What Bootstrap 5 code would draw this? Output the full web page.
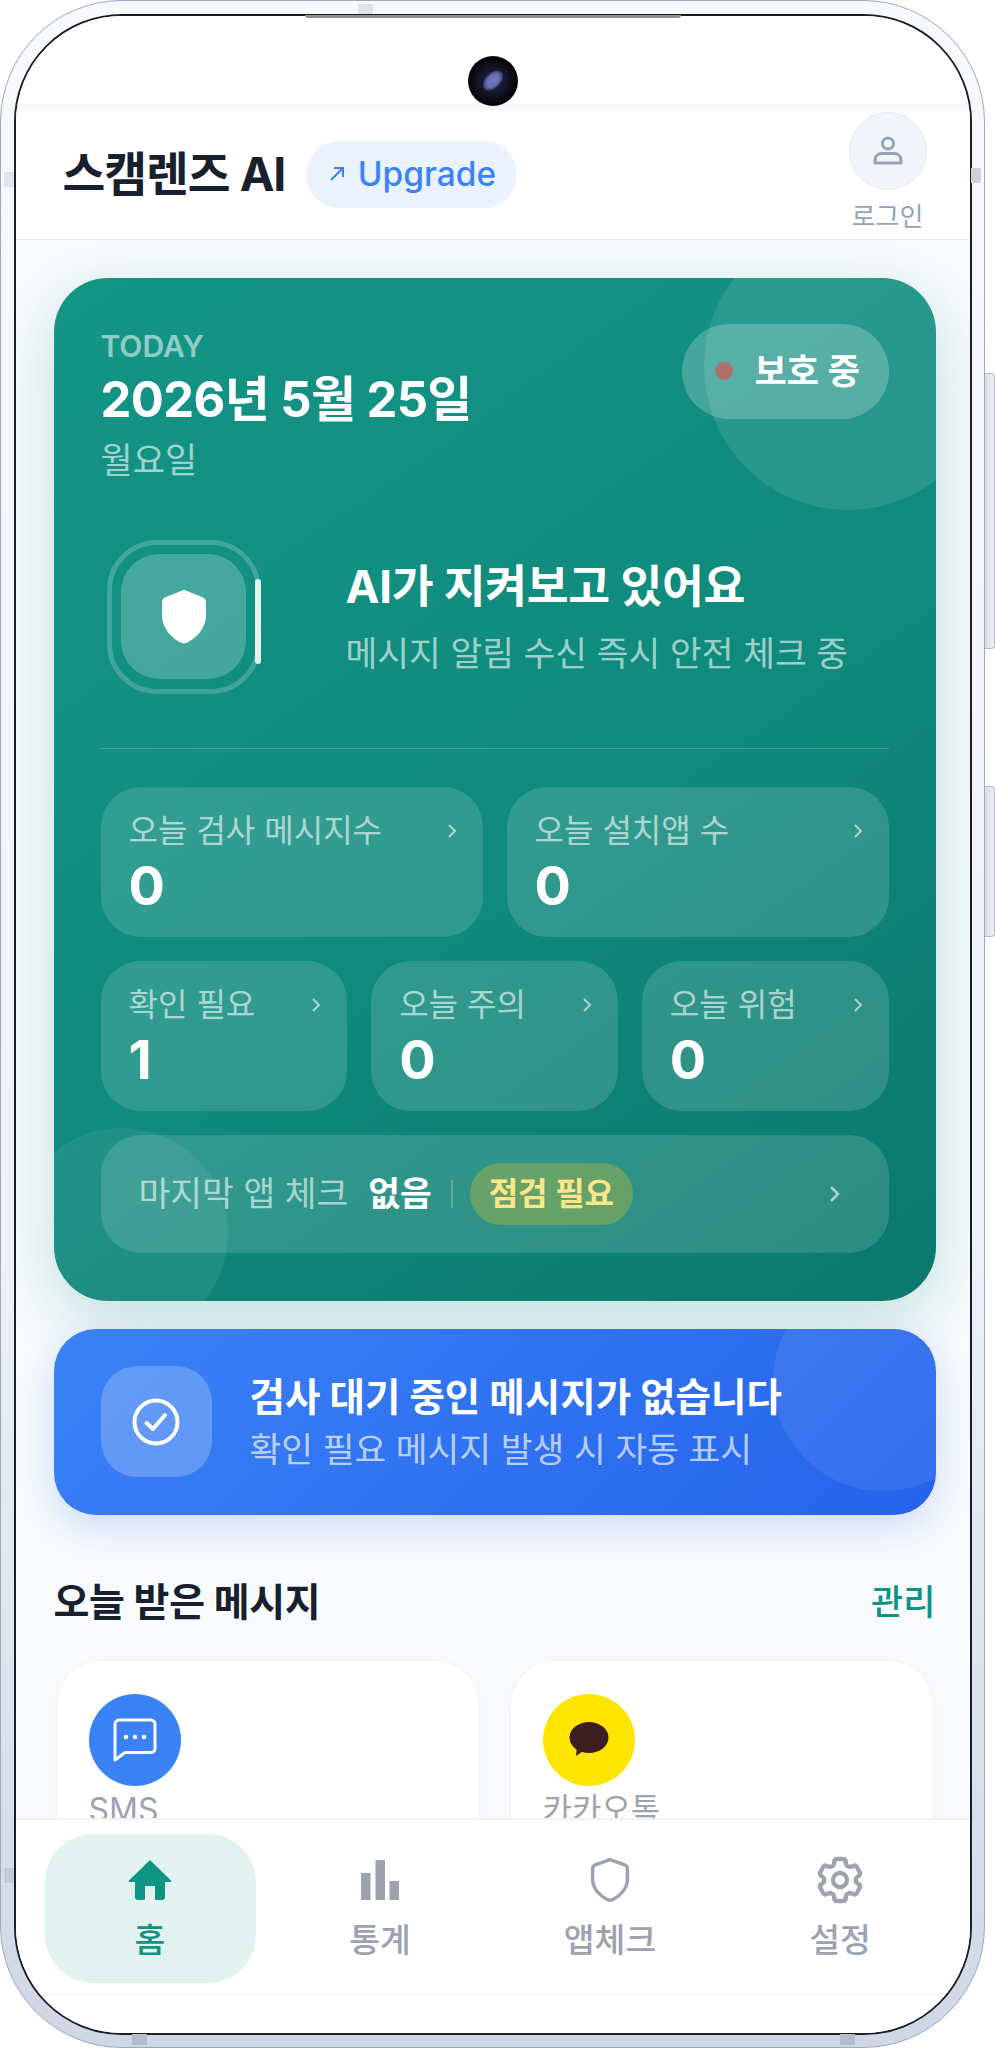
<!DOCTYPE html>
<html lang="ko">
<head>
    <meta charset="UTF-8">
    <meta name="viewport" content="width=device-width, initial-scale=1.0">
    <title>스캠렌즈 AI</title>
    <link href="https://cdn.jsdelivr.net/npm/bootstrap@5.3.0/dist/css/bootstrap.min.css" rel="stylesheet">
    <style>
        html, body { margin: 0; background: #fff; }
        body { font-family: Inter, "Noto Sans CJK KR", sans-serif; width: 995px; height: 2048px; overflow: hidden; color: #111827; }

        /* phone frame */
        .phone { position: relative; width: 985px; height: 2048px; border: 1.5px solid #9ea7bd; border-radius: 122px; padding: 12.5px; background: linear-gradient(180deg, #f8f9fd 0%, #eef1f8 60%, #cfd7e6 100%); }
        .screen { height: 100%; border: 2px solid #1b1e26; border-radius: 108px; overflow: hidden; background: #f8fafc; }
        .side-key { position: absolute; left: 984px; width: 10px; border: 1.5px solid #b4b9c5; border-left: 0; border-radius: 0 4px 4px 0; background: linear-gradient(90deg, #d9dce4, #eef0f4); }
        .key-a { top: 372px; height: 276px; }
        .key-b { top: 785px; height: 151px; }
        .band { position: absolute; background: #dfe3ec; }
        .band-top { left: 357px; top: 3px; width: 15px; height: 10px; }
        .band-l1 { left: 3px; top: 171px; width: 10px; height: 15px; }
        .band-l2 { left: 3px; top: 1867px; width: 10px; height: 15px; background: #c3cbdb; }
        .band-r { left: 970px; top: 167px; width: 10px; height: 15px; background: #ccd1de; }
        .band-b1 { left: 131px; top: 2033px; width: 15px; height: 11px; background: #b3bbcd; }
        .band-b2 { left: 839px; top: 2033px; width: 15px; height: 11px; background: #b3bbcd; }
        .speaker { position: absolute; left: 304px; top: 14px; width: 376px; height: 3px; border-radius: 0 0 8px 8px; background: #8b8e96; }
        .cam { position: absolute; left: 467px; top: 55px; width: 50px; height: 50px; border-radius: 50%; background: radial-gradient(circle at 50% 50%, #262a44 0, #14162a 38%, #08080c 62%, #000 100%); }
        .cam::after { content: ""; position: absolute; left: 13px; top: 17px; width: 24px; height: 15px; border-radius: 50%; transform: rotate(-45deg); background: radial-gradient(ellipse, #7478d8 0, #6670b0 45%, rgba(60,70,120,.5) 75%, transparent 100%); }

        /* top bars */
        .status-gap { height: 88px; flex: none; background: #fff; }
        .band-line { height: 6px; flex: none; background: #f7f8fb; }
        .app-head { height: 130px; flex: none; background: #fff; border-bottom: 1px solid #e9ecf1; padding: 0 32px 0 47px; }
        .brand { font-size: 46.5px; font-weight: 700; letter-spacing: -1px; color: #17202c; line-height: 1; }
        .upgrade { height: 67px; width: 211px; margin-left: 21px; border-radius: 34px; background: #eaf2fe; color: #3b82f6; font-size: 33.5px; font-weight: 500; gap: 12px; }
        .login-wrap { margin-top: -4px; width: 100px; }
        .login-ring { width: 78px; height: 78px; border-radius: 50%; background: #f1f5f9; border: 1.5px solid #e2e8f0; }
        .login-txt { font-size: 26px; line-height: 32px; color: #94a3b8; margin-top: 11px; }

        /* scroll area */
        .scroll-area { height: 1578px; flex: none; overflow: hidden; padding: 38px 34px 0 38px; }
        .guard-card { position: relative; overflow: hidden; height: 1023px; padding: 46px 47px; border-radius: 54px; color: #fff; background: linear-gradient(145deg, #149586 0%, #0f8a7c 55%, #0b786b 100%); }
        .guard-wrap { border-radius: 54px; box-shadow: 0 18px 60px rgba(15, 148, 132, .24); }
        .blob { position: absolute; border-radius: 50%; pointer-events: none; }
        .blob-a { width: 288px; height: 288px; right: -56px; top: -56px; background: rgba(255,255,255,.1); }
        .blob-b { width: 212px; height: 212px; left: -38px; bottom: -39px; background: rgba(255,255,255,.07); }
        .guard-card > .inner { position: relative; }
        .today { margin-top: 5px; font-size: 30px; line-height: 34px; font-weight: 600; color: rgba(255,255,255,.55); }
        .date-txt { margin-top: 9px; font-size: 49px; line-height: 56px; font-weight: 700; letter-spacing: -.6px; }
        .day-txt { margin-top: 12px; font-size: 35px; line-height: 40px; color: rgba(255,255,255,.6); }
        .safe-pill { width: 207px; height: 95px; border-radius: 48px; background: rgba(255,255,255,.22); font-size: 35px; font-weight: 600; padding-left: 33px; gap: 22px; }
        .safe-dot { width: 18px; height: 18px; border-radius: 50%; background: #b06e6c; }
        .hero { margin-top: 60px; margin-left: 6px; }
        .ring { position: relative; width: 154px; height: 154px; flex: none; border: 5px solid rgba(255,255,255,.2); border-radius: 50px; }
        .ring-core { width: 125px; height: 125px; border-radius: 38px; background: rgba(255,255,255,.22); margin: 9.5px; }
        .ring-arc { position: absolute; right: -5.5px; top: 34px; width: 6px; height: 85px; border-radius: 3px; background: #e2f3f0; }
        .hero-txt { margin-left: 85px; }
        .hero-title { font-size: 45.5px; line-height: 54px; font-weight: 700; letter-spacing: -.3px; }
        .hero-sub { margin-top: 20px; font-size: 34.5px; line-height: 40px; color: rgba(255,255,255,.62); }
        .split { margin: 54px 0 38px; height: 1.5px; background: rgba(255,255,255,.2); }
        .tile-row { gap: 24px; margin-bottom: 24px; }
        .tile { flex: 1 1 0; min-width: 0; height: 150px; padding: 26px 28px 0; border-radius: 40px; background: rgba(255,255,255,.14); }
        .tile-label { font-size: 32px; line-height: 36px; color: rgba(255,255,255,.62); }
        .tile-num { margin-top: 7px; font-size: 54px; line-height: 60px; font-weight: 700; }
        .chev { flex: none; margin-right: -2px; }
        .last-row { height: 118px; border-radius: 40px; background: rgba(255,255,255,.14); padding: 0 48px 0 38px; font-size: 34.5px; color: rgba(255,255,255,.6); }
        .last-val { margin-left: 20px; color: #fff; font-weight: 700; }
        .last-bar { margin: 0 17px 0 19px; width: 2px; height: 28px; background: rgba(255,255,255,.22); }
        .check-pill { width: 163px; height: 62px; border-radius: 31px; background: rgba(250,204,21,.27); color: #fde68a; font-size: 32px; font-weight: 700; }

        .wait-card { position: relative; overflow: hidden; height: 186px; margin-top: 28px; padding: 0 47px; border-radius: 42px; color: #fff; background: linear-gradient(135deg, #3b82f6 0%, #2563eb 100%); box-shadow: 0 12px 40px rgba(37, 99, 235, .2); }
        .blob-c { width: 220px; height: 220px; right: -57px; top: -58px; background: rgba(255,255,255,.08); }
        .wait-ico { position: relative; width: 111px; height: 111px; flex: none; border-radius: 36px; background: rgba(255,255,255,.22); }
        .wait-txt { position: relative; margin-left: 38px; }
        .wait-title { font-size: 38.5px; line-height: 48px; font-weight: 700; }
        .wait-sub { margin-top: 8px; font-size: 34.5px; line-height: 42px; color: rgba(255,255,255,.68); }

        .sec-head { margin-top: 62px; line-height: 50px; }
        .sec-title { font-size: 39px; font-weight: 700; color: #17202c; letter-spacing: -.3px; }
        .sec-link { font-size: 35px; font-weight: 500; color: #0f9484; }
        .msg-row { margin: 34px 3px 0; gap: 32px; }
        .msg-box { flex: 1 1 0; height: 300px; padding: 33px 32px; border-radius: 44px; background: #fff; box-shadow: 0 0 0 1px #f1f3f6, 0 6px 24px rgba(15,23,42,.025); }
        .msg-ico { width: 92px; height: 92px; border-radius: 50%; }
        .ico-sms { background: #3b82f6; }
        .ico-kakao { background: #fee500; }
        .msg-name { margin-top: 6px; font-size: 32px; line-height: 36px; color: #9ca3af; }

        /* tab bar */
        .tabs { height: 216px; background: #fff; border-top: 2px solid #eff1f4; padding: 14px 24px 0 29px; gap: 19px; align-items: flex-start; }
        .tab-wrap { height: 216px; flex: none; background: #fff; position: relative; }
        .tab-item { flex: 1 1 0; height: 149px; border-radius: 48px; color: #9ca3af; font-size: 33.5px; font-weight: 500; }
        .tab-item svg { height: 48px; width: 48px; margin-top: 22px; }
        .tab-item span { margin-top: 16px; line-height: 40px; }
        .tab-item.is-on { background: #e1f2ef; color: #0f9484; }
        .tab-rule { position: absolute; left: 0; right: 0; top: 176px; height: 1px; background: #eef0f3; }
    </style>
</head>
<body>
    <div class="phone">
        <div class="screen d-flex flex-column">
            <div class="status-gap"></div>
            <div class="band-line"></div>
            <header class="app-head d-flex align-items-center justify-content-between">
                <div class="d-flex align-items-center">
                    <div class="brand">스캠렌즈 AI</div>
                    <div class="upgrade d-flex align-items-center justify-content-center">
                        <svg width="18" height="18" viewBox="0 0 18 18" fill="none" stroke="#3b82f6" stroke-width="2"><path d="M3 15 15 3M6 3h9v9"/></svg>
                        <span>Upgrade</span>
                    </div>
                </div>
                <div class="login-wrap d-flex flex-column align-items-center">
                    <div class="login-ring d-flex align-items-center justify-content-center">
                        <svg width="32" height="30" viewBox="0 0 32 30" fill="none" stroke="#94a3b8" stroke-width="3"><circle cx="16" cy="7.5" r="5.5"/><path d="M3 27v-3c0-4 3-6.500 7-6.500h12c4 0 7 2.500 7 6.500v3z" stroke-linejoin="round"/></svg>
                    </div>
                    <div class="login-txt">로그인</div>
                </div>
            </header>

            <main class="scroll-area">
                <div class="guard-wrap">
                <section class="guard-card">
                    <div class="blob blob-a"></div>
                    <div class="blob blob-b"></div>
                    <div class="inner">
                        <div class="d-flex justify-content-between align-items-start">
                            <div>
                                <div class="today">TODAY</div>
                                <div class="date-txt">2026년 5월 25일</div>
                                <div class="day-txt">월요일</div>
                            </div>
                            <div class="safe-pill d-flex align-items-center">
                                <span class="safe-dot"></span>
                                <span>보호 중</span>
                            </div>
                        </div>

                        <div class="hero d-flex align-items-center">
                            <div class="ring">
                                <div class="ring-core d-flex align-items-center justify-content-center">
                                    <svg width="44" height="54" viewBox="0 0 44 54" fill="#fff"><path d="M22 0c1 0 2 .4 3 1l15 6c2 .8 4 2 4 5v13c0 13-10 24-20 28-1.400.6-2.600.6-4 0C10 49 0 38 0 25V12c0-3 2-4.200 4-5l15-6c1-.6 2-1 3-1z"/></svg>
                                </div>
                                <div class="ring-arc"></div>
                            </div>
                            <div class="hero-txt">
                                <div class="hero-title">AI가 지켜보고 있어요</div>
                                <div class="hero-sub">메시지 알림 수신 즉시 안전 체크 중</div>
                            </div>
                        </div>

                        <div class="split"></div>

                        <div class="tile-row d-flex">
                            <div class="tile">
                                <div class="d-flex justify-content-between align-items-center"><span class="tile-label">오늘 검사 메시지수</span><svg class="chev" width="10" height="16" viewBox="0 0 10 16" fill="none" stroke="rgba(255,255,255,.6)" stroke-width="2"><path d="m2 2 6 6-6 6"/></svg></div>
                                <div class="tile-num">0</div>
                            </div>
                            <div class="tile">
                                <div class="d-flex justify-content-between align-items-center"><span class="tile-label">오늘 설치앱 수</span><svg class="chev" width="10" height="16" viewBox="0 0 10 16" fill="none" stroke="rgba(255,255,255,.6)" stroke-width="2"><path d="m2 2 6 6-6 6"/></svg></div>
                                <div class="tile-num">0</div>
                            </div>
                        </div>
                        <div class="tile-row d-flex">
                            <div class="tile">
                                <div class="d-flex justify-content-between align-items-center"><span class="tile-label">확인 필요</span><svg class="chev" width="10" height="16" viewBox="0 0 10 16" fill="none" stroke="rgba(255,255,255,.6)" stroke-width="2"><path d="m2 2 6 6-6 6"/></svg></div>
                                <div class="tile-num">1</div>
                            </div>
                            <div class="tile">
                                <div class="d-flex justify-content-between align-items-center"><span class="tile-label">오늘 주의</span><svg class="chev" width="10" height="16" viewBox="0 0 10 16" fill="none" stroke="rgba(255,255,255,.6)" stroke-width="2"><path d="m2 2 6 6-6 6"/></svg></div>
                                <div class="tile-num">0</div>
                            </div>
                            <div class="tile">
                                <div class="d-flex justify-content-between align-items-center"><span class="tile-label">오늘 위험</span><svg class="chev" width="10" height="16" viewBox="0 0 10 16" fill="none" stroke="rgba(255,255,255,.6)" stroke-width="2"><path d="m2 2 6 6-6 6"/></svg></div>
                                <div class="tile-num">0</div>
                            </div>
                        </div>

                        <div class="last-row d-flex align-items-center">
                            <span>마지막 앱 체크</span>
                            <span class="last-val">없음</span>
                            <span class="last-bar"></span>
                            <span class="check-pill d-flex align-items-center justify-content-center">점검 필요</span>
                            <svg class="ms-auto" width="12" height="20" viewBox="0 0 12 20" fill="none" stroke="rgba(255,255,255,.6)" stroke-width="2.500"><path d="m2 3 7 7-7 7"/></svg>
                        </div>
                    </div>
                </section>
                </div>

                <section class="wait-card d-flex align-items-center">
                    <div class="blob blob-c"></div>
                    <div class="wait-ico d-flex align-items-center justify-content-center">
                        <svg width="48" height="48" viewBox="0 0 48 48" fill="none" stroke="#fff" stroke-width="4"><circle cx="24" cy="24" r="21.500"/><path d="m14.500 25 6.500 6 12-14" stroke-linecap="round" stroke-linejoin="round"/></svg>
                    </div>
                    <div class="wait-txt">
                        <div class="wait-title">검사 대기 중인 메시지가 없습니다</div>
                        <div class="wait-sub">확인 필요 메시지 발생 시 자동 표시</div>
                    </div>
                </section>

                <div class="sec-head d-flex justify-content-between align-items-center">
                    <span class="sec-title">오늘 받은 메시지</span>
                    <span class="sec-link">관리</span>
                </div>

                <div class="msg-row d-flex">
                    <div class="msg-box">
                        <div class="msg-ico ico-sms d-flex align-items-center justify-content-center">
                            <svg width="44" height="44" viewBox="0 0 44 44" fill="none" stroke="#fff" stroke-width="3"><path d="M6 2h32c2 0 4 2 4 4v25c0 2-2 3.500-4 3.500H12L2 42V6c0-2 2-4 4-4z" stroke-linejoin="round"/><g fill="#fff" stroke="none"><circle cx="13" cy="19" r="2.300"/><circle cx="22" cy="19" r="2.300"/><circle cx="31" cy="19" r="2.300"/></g></svg>
                        </div>
                        <div class="msg-name">SMS</div>
                    </div>
                    <div class="msg-box">
                        <div class="msg-ico ico-kakao d-flex align-items-center justify-content-center">
                            <svg width="40" height="36" viewBox="0 0 40 36" fill="#3c1e1e"><ellipse cx="20" cy="15.500" rx="19.500" ry="15.500"/><path d="M8 24 7 34l10-7z"/></svg>
                        </div>
                        <div class="msg-name">카카오톡</div>
                    </div>
                </div>
            </main>

            <div class="tab-wrap">
                <nav class="tabs d-flex">
                    <div class="tab-item is-on d-flex flex-column align-items-center">
                        <svg viewBox="0 0 48 48" fill="#0f9484"><path d="M24 4 45 24.500c.6.700.2 1.500-.7 1.500H39v15c0 1.700-1 3-3 3h-6c-.8 0-1-.5-1-1.200V30H19v12.800c0 .7-.2 1.200-1 1.200h-6c-2 0-3-1.300-3-3V26H3.700c-.9 0-1.300-.8-.7-1.500z"/></svg>
                        <span>홈</span>
                    </div>
                    <div class="tab-item d-flex flex-column align-items-center">
                        <svg viewBox="0 0 48 48" fill="#9ca3af"><rect x="5" y="17" width="9.500" height="27"/><rect x="19.500" y="4" width="9.500" height="40"/><rect x="33.500" y="25" width="9.500" height="19"/></svg>
                        <span>통계</span>
                    </div>
                    <div class="tab-item d-flex flex-column align-items-center">
                        <svg viewBox="-1.500 -1.500 51 51" fill="none" stroke="#9ca3af" stroke-width="3.700"><path d="M24 2.500c1 0 2 .4 3 .9l12 4.300c2 .8 3.500 1.800 3.500 4V23c0 10-7.500 18-16 22-1.700.8-3.300.8-5 0-8.500-4-16-12-16-22V11.700c0-2.200 1.500-3.200 3.500-4L21 3.400c1-.5 2-.9 3-.9z" stroke-linejoin="round"/></svg>
                        <span>앱체크</span>
                    </div>
                    <div class="tab-item d-flex flex-column align-items-center">
                        <svg viewBox="1.700 1.700 20.600 20.600" fill="none" stroke="#9ca3af" stroke-width="1.850" stroke-linejoin="round"><path d="M9.594 3.940c.09-.542.56-.94 1.110-.94h2.593c.55 0 1.020.398 1.110.94l.213 1.281c.063.374.313.686.645.87.074.04.147.083.22.127.325.196.72.257 1.075.124l1.217-.456a1.125 1.125 0 0 1 1.370.49l1.296 2.247a1.125 1.125 0 0 1-.26 1.431l-1.003.827c-.293.241-.438.613-.43.992a7.723 7.723 0 0 1 0 .255c-.008.378.137.75.43.991l1.004.827c.424.35.534.955.26 1.430l-1.298 2.247a1.125 1.125 0 0 1-1.369.491l-1.217-.456c-.355-.133-.75-.072-1.076.124a6.470 6.470 0 0 1-.22.128c-.331.183-.581.495-.644.869l-.213 1.281c-.09.543-.56.94-1.110.94h-2.594c-.55 0-1.019-.398-1.110-.94l-.213-1.281c-.062-.374-.312-.686-.644-.87a6.520 6.520 0 0 1-.22-.127c-.325-.196-.72-.257-1.076-.124l-1.217.456a1.125 1.125 0 0 1-1.369-.49l-1.297-2.247a1.125 1.125 0 0 1 .26-1.431l1.004-.827c.292-.24.437-.613.43-.991a6.932 6.932 0 0 1 0-.255c.007-.38-.138-.751-.43-.992l-1.004-.827a1.125 1.125 0 0 1-.26-1.430l1.297-2.247a1.125 1.125 0 0 1 1.370-.491l1.216.456c.356.133.751.072 1.076-.124.072-.044.146-.086.22-.128.332-.183.582-.495.644-.869l.214-1.280Z"/><circle cx="12" cy="12" r="3"/></svg>
                        <span>설정</span>
                    </div>
                </nav>
                <div class="tab-rule"></div>
            </div>
        </div>

        <div class="speaker"></div>
        <div class="cam"></div>
        <div class="band band-top"></div>
        <div class="band band-l1"></div>
        <div class="band band-l2"></div>
        <div class="band band-r"></div>
        <div class="band band-b1"></div>
        <div class="band band-b2"></div>
        <div class="side-key key-a"></div>
        <div class="side-key key-b"></div>
    </div>

    <script src="https://cdn.jsdelivr.net/npm/bootstrap@5.3.0/dist/js/bootstrap.bundle.min.js"></script>
</body>
</html>
